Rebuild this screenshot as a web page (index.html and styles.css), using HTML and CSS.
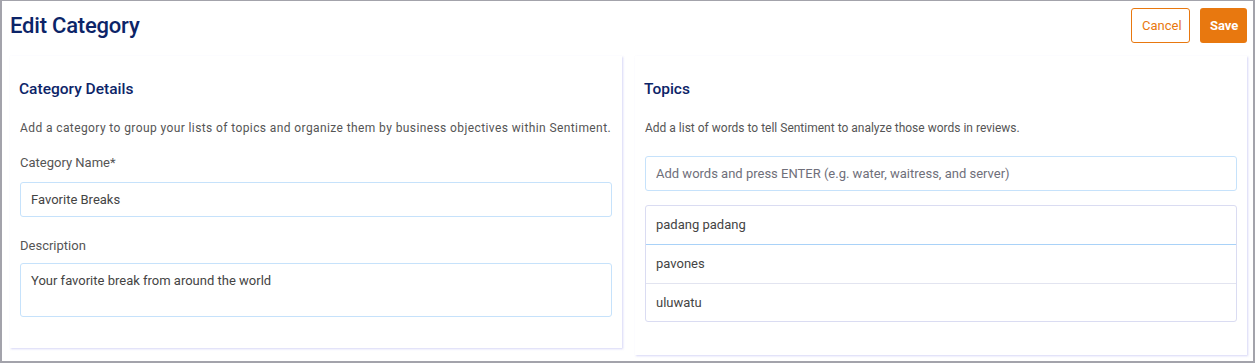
FILE: index.html
```html
<!DOCTYPE html>
<html>
	<head>
		<meta http-equiv="Content-Type" content="text/html; charset=UTF-8" />
		<title>Edit Category</title>
		<link rel="stylesheet" href="styles.css">
	</head>

	<body>
		<header class="page-header">
			<h1>Edit Category</h1>
			<div class="actions">
				<button class="btn btn-cancel">Cancel</button>
				<button class="btn btn-save">Save</button>
			</div>
		</header>

		<div class="columns">
			<section class="panel panel-details">
				<h2>Category Details</h2>
				<p class="hint">Add a category to group your lists of topics and organize them by business objectives within Sentiment.</p>

				<label for="name" class="label-name">Category Name*</label>
				<input type="text" id="name" class="field" value="Favorite Breaks" />

				<label for="desc" class="label-desc">Description</label>
				<textarea id="desc" class="field area">Your favorite break from around the world</textarea>
			</section>

			<section class="panel panel-topics">
				<h2>Topics</h2>
				<p class="hint">Add a list of words to tell Sentiment to analyze those words in reviews.</p>

				<input type="text" class="field topic-input" placeholder="Add words and press ENTER (e.g. water, waitress, and server)" />

				<ul class="topic-list">
					<li class="active">padang padang</li>
					<li>pavones</li>
					<li>uluwatu</li>
				</ul>
			</section>
		</div>
	</body>
</html>
```

FILE: styles.css
```css
html {
	background: #fff;
}

body {
	margin: 0;
	height: 363px;
	box-sizing: border-box;
	border: 2px solid #a3a3ab;
	border-top-width: 1px;
	font-family: Roboto, "Noto Sans", sans-serif;
	color: #555;
	background: #fff;
}

.page-header {
	display: flex;
	justify-content: space-between;
	align-items: center;
	padding: 6px 6px 0 8px;
	height: 36px;
}
h1 {
	margin: 0;
	font-size: 22px;
	font-weight: 500;
	color: #0c2468;
	letter-spacing: -0.2px;
}
.actions {
	display: flex;
	gap: 10px;
}
.btn {
	height: 35px;
	border-radius: 3px;
	font-family: Roboto, sans-serif;
	font-size: 13px;
	padding: 0 10px;
	cursor: pointer;
}
.btn-cancel {
	background: #fff;
	border: 1px solid #e8780f;
	color: #e8780f;
	width: 59px;
}
.btn-save {
	background: #e8780f;
	border: none;
	color: #fff;
	font-weight: 700;
	width: 47px;
}

.columns {
	display: grid;
	grid-template-columns: 612px 612px;
	gap: 13px;
	padding: 13px 0 0 8px;
	align-items: start;
}
.panel {
	display: flex;
	flex-direction: column;
	padding: 24px 10px 31px 10px;
	box-shadow: 1px 1px 2px rgba(120, 120, 225, 0.3);
}
.panel-topics {
	padding-bottom: 33px;
}

h2 {
	margin: 0 0 0 -1px;
	font-size: 15.5px;
	line-height: 18px;
	font-weight: 500;
	color: #0c2468;
}
.hint {
	margin: 22px 0 0;
	font-size: 12px;
	line-height: 16px;
	color: #555;
}
.panel-details .hint {
	letter-spacing: 0.4px;
}
label {
	font-size: 13px;
	line-height: 16px;
	color: #555;
}
.label-name {
	margin-top: 19px;
}
.label-desc {
	margin-top: 21px;
}

.field {
	display: block;
	box-sizing: border-box;
	width: 100%;
	height: 35px;
	margin: 11px 0 0;
	padding: 0 10px;
	border: 1px solid #c6e2fb;
	border-radius: 3px;
	font-family: Roboto, sans-serif;
	font-size: 13px;
	color: #444;
	outline: none;
}
.field::placeholder {
	color: #6f6f7a;
}
.area {
	height: 54px;
	margin-top: 9px;
	padding: 9px 10px;
	line-height: 16px;
	resize: none;
}
.topic-input {
	margin-top: 20px;
}

.topic-list {
	list-style: none;
	margin: 14px 0 0;
	padding: 0;
	border: 1px solid #dadcf2;
	border-radius: 3px;
}
.topic-list li {
	height: 38px;
	line-height: 38px;
	padding: 0 10px;
	font-size: 13px;
	color: #444;
	border-top: 1px solid #e2e4f0;
}
.topic-list li:first-child {
	border-top: none;
}
.topic-list li:last-child {
	height: 37px;
	line-height: 37px;
}
.topic-list li.active {
	border-bottom: 1px solid #a9d2f8;
}
.topic-list li.active + li {
	border-top: none;
}
```
